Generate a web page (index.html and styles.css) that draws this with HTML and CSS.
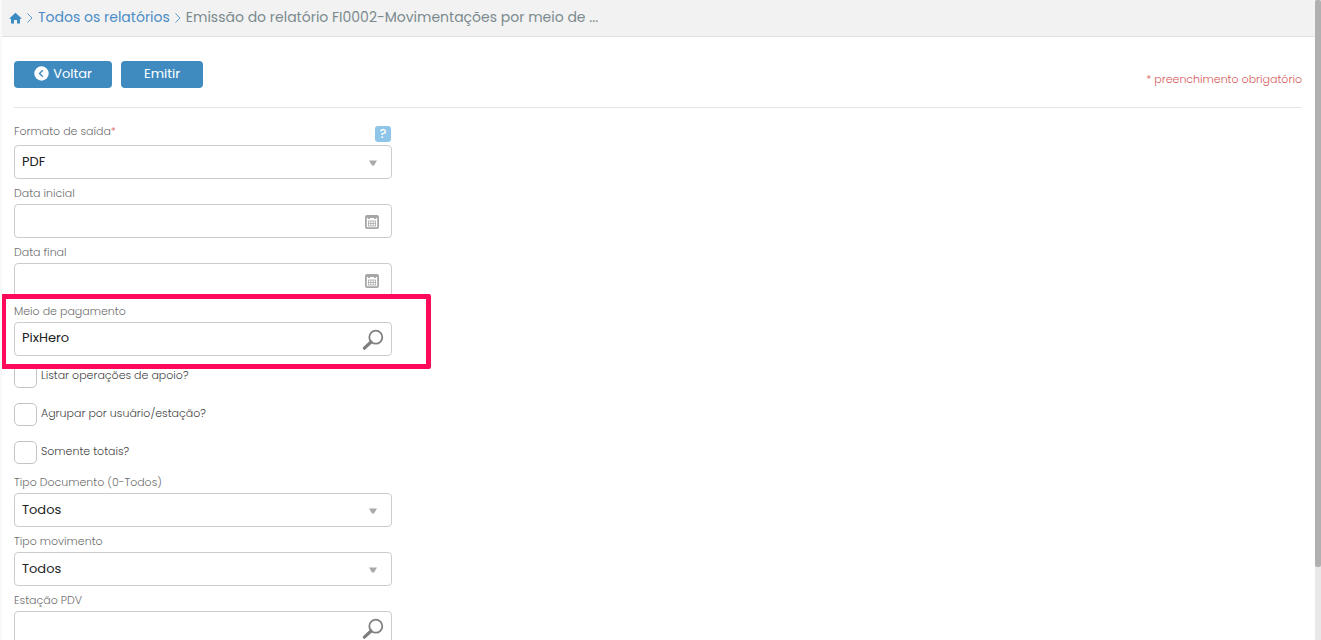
FILE: index.html
```html
<!DOCTYPE html>
<html lang="pt-BR">
<head>
    <meta charset="UTF-8">
    <meta name="viewport" content="width=device-width, initial-scale=1.0">
    <title>Emissão do relatório</title>
    <link rel="stylesheet" href="styles.css">
</head>
<body>
<main class="page">
    <nav class="breadcrumb">
        <a class="home" href="#" aria-label="Início">
            <svg width="13" height="12" viewBox="0 0 13 12"><path d="M6.5 0.8 L13 6.8 H11 V11.5 H8 V8 H5 V11.5 H2 V6.8 H0 Z" fill="#3c8cc4"/></svg>
        </a>
        <svg class="sep" width="6" height="12" viewBox="0 0 6 12"><path d="M0.5 1.5 L5 6 L0.5 10.5" fill="none" stroke="#5b9bd0"/></svg>
        <a href="#">Todos os relatórios</a>
        <svg class="sep" width="6" height="12" viewBox="0 0 6 12"><path d="M0.5 1.5 L5 6 L0.5 10.5" fill="none" stroke="#5b9bd0"/></svg>
        <span class="current">Emissão do relatório FI0002-Movimentações por meio de ...</span>
    </nav>

    <form class="content">
        <div class="toolbar">
            <button type="button" class="btn btn-back">
                <svg width="15" height="15" viewBox="0 0 15 15"><circle cx="7.5" cy="7.5" r="7.2" fill="#fff"/><path d="M8.8 4.2 L5.5 7.5 L8.8 10.8" fill="none" stroke="#3f8bc0" stroke-width="1.4"/></svg>
                Voltar
            </button>
            <button type="submit" class="btn btn-emit">Emitir</button>
            <span class="required-note">* preenchimento obrigatório</span>
        </div>

        <div class="fields">
            <div class="field">
                <div class="field-head">
                    <label for="formato">Formato de saída<span class="required">*</span></label>
                    <button type="button" class="help">?</button>
                </div>
                <div class="control">
                    <select id="formato"><option>PDF</option></select>
                    <svg class="arrow" width="8" height="6" viewBox="0 0 8 6"><path d="M0 0.5 H8 L5 5.5 H3 Z" fill="#a9a9a9"/></svg>
                </div>
            </div>

            <div class="field">
                <label for="data-inicial">Data inicial</label>
                <div class="control">
                    <input type="text" id="data-inicial">
                    <svg class="calendar" width="14" height="14" viewBox="0 0 14 14"><rect x="0.9" y="0.9" width="12.2" height="12.2" rx="1.2" fill="#fff" stroke="#a6a6a6" stroke-width="1.8"/><path d="M1 2 H13 M4 1 V4 M10 1 V4" stroke="#a6a6a6" stroke-width="1.8"/><path d="M3 6 H11 M3 8.5 H11 M3 11 H11 M3.5 6 V11 M5.8 6 V11 M8.2 6 V11 M10.5 6 V11" stroke="#a9a9a9" stroke-width="0.8"/></svg>
                </div>
            </div>

            <div class="field">
                <label for="data-final">Data final</label>
                <div class="control">
                    <input type="text" id="data-final">
                    <svg class="calendar" width="14" height="14" viewBox="0 0 14 14"><rect x="0.9" y="0.9" width="12.2" height="12.2" rx="1.2" fill="#fff" stroke="#a6a6a6" stroke-width="1.8"/><path d="M1 2 H13 M4 1 V4 M10 1 V4" stroke="#a6a6a6" stroke-width="1.8"/><path d="M3 6 H11 M3 8.5 H11 M3 11 H11 M3.5 6 V11 M5.8 6 V11 M8.2 6 V11 M10.5 6 V11" stroke="#a9a9a9" stroke-width="0.8"/></svg>
                </div>
            </div>

            <div class="field highlighted">
                <label for="meio">Meio de pagamento</label>
                <div class="control">
                    <input type="text" id="meio" value="PixHero">
                    <svg class="search" width="22" height="22" viewBox="0 0 22 22"><circle cx="13.8" cy="8.2" r="6.5" fill="none" stroke="#808080" stroke-width="1.8"/><path d="M9 13 L2.4 19.2" stroke="#7d7d7d" stroke-width="3.2" stroke-linecap="round"/></svg>
                </div>
            </div>

            <div class="checks">
                <label class="check"><input type="checkbox"><span>Listar operações de apoio?</span></label>
                <label class="check"><input type="checkbox"><span>Agrupar por usuário/estação?</span></label>
                <label class="check"><input type="checkbox"><span>Somente totais?</span></label>
            </div>

            <div class="field">
                <label for="tipo-documento">Tipo Documento (0-Todos)</label>
                <div class="control">
                    <select id="tipo-documento"><option>Todos</option></select>
                    <svg class="arrow" width="8" height="6" viewBox="0 0 8 6"><path d="M0 0.5 H8 L5 5.5 H3 Z" fill="#a9a9a9"/></svg>
                </div>
            </div>

            <div class="field">
                <label for="tipo-movimento">Tipo movimento</label>
                <div class="control">
                    <select id="tipo-movimento"><option>Todos</option></select>
                    <svg class="arrow" width="8" height="6" viewBox="0 0 8 6"><path d="M0 0.5 H8 L5 5.5 H3 Z" fill="#a9a9a9"/></svg>
                </div>
            </div>

            <div class="field">
                <label for="estacao">Estação PDV</label>
                <div class="control">
                    <input type="text" id="estacao">
                    <svg class="search" width="22" height="22" viewBox="0 0 22 22"><circle cx="13.8" cy="8.2" r="6.5" fill="none" stroke="#808080" stroke-width="1.8"/><path d="M9 13 L2.4 19.2" stroke="#7d7d7d" stroke-width="3.2" stroke-linecap="round"/></svg>
                </div>
            </div>
        </div>
    </form>
</main>
<div class="scrollbar"><div class="thumb"></div></div>
</body>
</html>
```

FILE: styles.css
```css
* {
    box-sizing: border-box;
}
body {
    margin: 0;
    height: 100vh;
    display: flex;
    overflow: hidden;
    background-color: #fff;
    font-family: Poppins, Inter, sans-serif;
    font-size: 11px;
}
input, select, button {
    font-family: inherit;
}
.page {
    flex: 1;
    min-width: 0;
    overflow: hidden;
    border-left: 2px solid #f9f9f9;
}
.breadcrumb {
    display: flex;
    align-items: center;
    gap: 5px;
    height: 37px;
    padding: 0 7px 1px;
    background-color: #f2f2f2;
    border-bottom: 1px solid #e0e0e0;
    font-size: 14px;
    white-space: nowrap;
}
.breadcrumb a {
    color: #4a8cc7;
    text-decoration: none;
}
.breadcrumb .home {
    display: flex;
}
.breadcrumb .current {
    color: #7b8a8e;
}
.content {
    padding: 0 13px 0 12px;
}
.toolbar {
    display: flex;
    align-items: flex-end;
    gap: 9px;
    padding: 24px 0 19px;
    border-bottom: 1px solid #e6e6e6;
}
.btn {
    display: flex;
    align-items: center;
    justify-content: center;
    gap: 4px;
    height: 27px;
    padding: 0 0 2px;
    border: none;
    border-radius: 4px;
    background-color: #3f8bc0;
    color: #fff;
    font-size: 13px;
    font-weight: 400;
    cursor: pointer;
}
.btn-back {
    width: 98px;
}
.btn-emit {
    width: 82px;
}
.required-note {
    margin-left: auto;
    color: #d65a5a;
    font-weight: 300;
    line-height: 18px;
}
.required {
    color: #e05a5a;
}
.fields {
    width: 378px;
    padding-top: 15px;
}
.field {
    position: relative;
    margin-bottom: 6px;
}
.field label {
    display: block;
    margin-bottom: 3px;
    color: #6e6e6e;
    font-weight: 300;
    line-height: 16px;
}
.field-head {
    display: flex;
    justify-content: space-between;
    height: 22px;
    padding-bottom: 3px;
}
.help {
    align-self: flex-end;
    width: 16px;
    height: 16px;
    margin-right: 1px;
    padding: 0;
    border: none;
    border-radius: 3px;
    background-color: #8ec5e8;
    color: #fff;
    font-size: 13px;
    font-weight: 500;
    line-height: 16px;
}
.control {
    position: relative;
}
.control input, .control select {
    display: block;
    width: 100%;
    height: 34px;
    padding: 0 40px 2px 7px;
    border: 1px solid #ccc;
    border-radius: 4px;
    background-color: #fff;
    color: #222;
    font-size: 13px;
    appearance: none;
}
.control svg {
    position: absolute;
    pointer-events: none;
}
.control .arrow {
    right: 15px;
    top: 15px;
}
.control .calendar {
    right: 13px;
    top: 11px;
}
.control .search {
    right: 8px;
    top: 7px;
}
/* frame around the field, over its neighbours */
.highlighted::after {
    content: "";
    position: absolute;
    z-index: 1;
    inset: -9px -39px -13px -13px;
    border: 5px solid #ff0a5b;
    border-radius: 2px;
    pointer-events: none;
}
.checks {
    display: flex;
    flex-direction: column;
    gap: 15px;
    margin: 9px 0 10px;
}
.check {
    display: flex;
    gap: 4px;
    color: #444;
    font-weight: 300;
    line-height: 20px;
}
.check input {
    width: 23px;
    height: 23px;
    margin: 0;
    border: 1px solid #c4c4c4;
    border-radius: 5px;
    background-color: #fff;
    appearance: none;
}
.scrollbar {
    width: 6px;
    background-color: #e8e8e8;
}
.thumb {
    height: 567px;
    border-radius: 2px;
    background-color: #b0b0b0;
}
```
